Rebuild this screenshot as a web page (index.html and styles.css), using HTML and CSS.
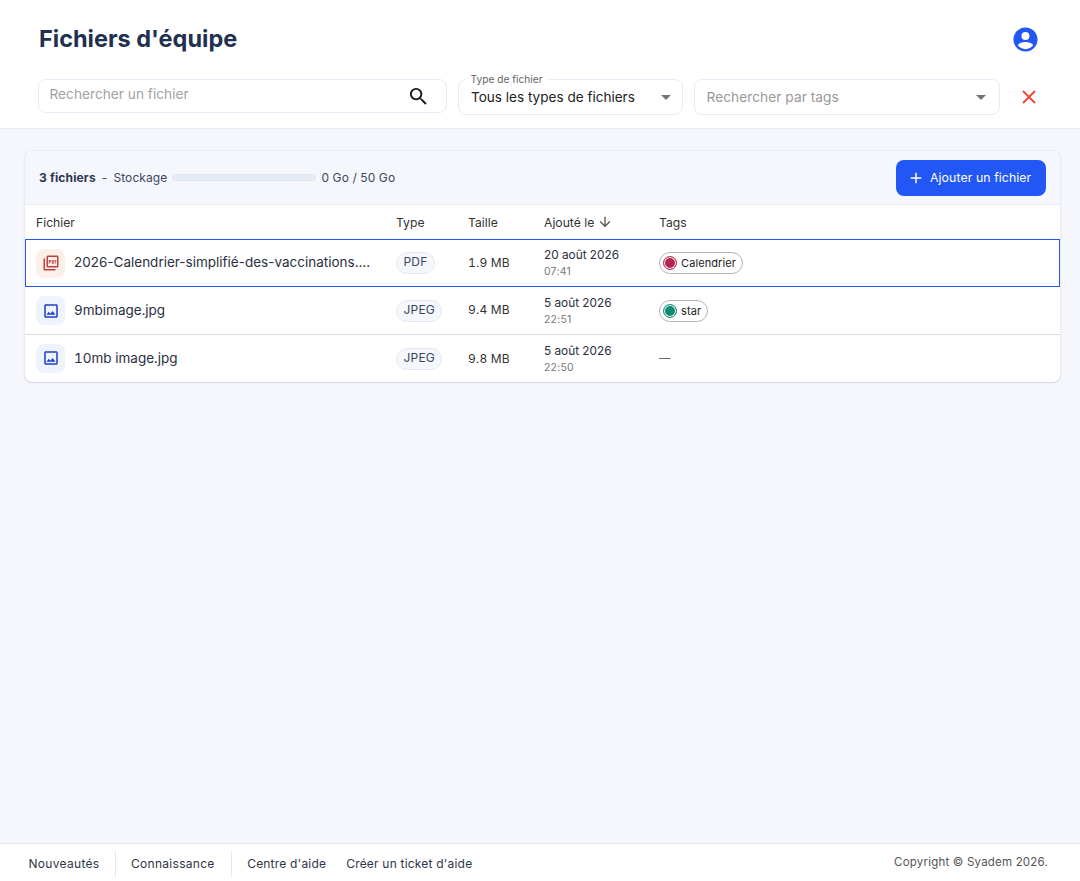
FILE: index.html
```html
<!DOCTYPE html>
<html lang="fr">
<head>
<meta charset="utf-8">
<title>Fichiers d'équipe</title>
<link rel="stylesheet" href="styles.css">
</head>
<body>
<div class="page">
  <header class="header">
    <div class="title-row">
      <h1 class="title">Fichiers d'équipe</h1>
      <svg class="avatar" viewBox="0 0 24 24" width="29" height="29"><path fill="#2357f5" d="M12 2C6.480 2 2 6.480 2 12s4.480 10 10 10 10-4.480 10-10S17.520 2 12 2zm0 3.800a3.300 3.300 0 1 1 0 6.600 3.300 3.300 0 0 1 0-6.600zM12 20c-2.600 0-4.900-1.200-6.400-3.200.6-1.700 4.300-2.700 6.400-2.700s5.800 1 6.400 2.700C16.900 18.800 14.600 20 12 20z"/></svg>
    </div>
    <div class="filters">
      <div class="field search">
        <span class="placeholder search-placeholder">Rechercher un fichier</span>
        <svg class="search-icon" viewBox="0 0 24 24" width="23" height="23"><path fill="#1a1a1a" d="M15.500 14h-.79l-.28-.27A6.470 6.470 0 0 0 16 9.500 6.500 6.500 0 1 0 9.500 16c1.610 0 3.090-.59 4.230-1.570l.27.28v.79l5 4.990L20.490 19l-4.990-5zm-6 0C7.010 14 5 11.990 5 9.500S7.010 5 9.500 5 14 7.010 14 9.500 11.990 14 9.500 14z"/></svg>
      </div>
      <div class="field select type-select">
        <span class="legend">Type de fichier</span>
        <span class="value">Tous les types de fichiers</span>
        <span class="caret"></span>
      </div>
      <div class="field select tag-select">
        <span class="placeholder tag-placeholder">Rechercher par tags</span>
        <span class="caret"></span>
      </div>
      <svg class="clear" viewBox="0 0 24 24" width="24" height="24"><path fill="none" stroke="#f44336" stroke-width="1.800" d="M6 6l12 12M18 6L6 18"/></svg>
    </div>
  </header>
  <main class="main">
    <section class="card">
      <div class="toolbar">
        <div class="summary">
          <strong class="count">3 fichiers</strong>
          <span class="sep">-</span>
          <span>Stockage</span>
          <span class="bar"></span>
          <span>0 Go / 50 Go</span>
        </div>
        <button class="add" type="button">
          <svg viewBox="0 0 24 24" width="18" height="18"><path fill="none" stroke="#fff" stroke-width="2" d="M12 5v14M5 12h14"/></svg>
          Ajouter un fichier
        </button>
      </div>
      <div class="row head">
        <div>Fichier</div>
        <div>Type</div>
        <div>Taille</div>
        <div class="sorted">Ajouté le
          <svg viewBox="0 0 24 24" width="16" height="16"><path fill="#555" d="M20 12l-1.410-1.410L13 16.170V4h-2v12.170l-5.580-5.590L4 12l8 8 8-8z"/></svg>
        </div>
        <div>Tags</div>
      </div>
      <div class="row item selected">
        <div class="file">
          <span class="file-icon pdf">
            <svg viewBox="0 0 24 24" width="18" height="18"><path fill="#c0403f" d="M20 2H8c-1.100 0-2 .9-2 2v12c0 1.100.9 2 2 2h12c1.100 0 2-.9 2-2V4c0-1.100-.9-2-2-2zm0 14H8V4h12v12zM4 6H2v14c0 1.100.9 2 2 2h14v-2H4V6zm12 6V9c0-.55-.45-1-1-1h-2v5h2c.55 0 1-.45 1-1zm-2-3h1v3h-1V9zm4 2h1v-1h-1V9h1V8h-2v5h1zm-8 0h1c.55 0 1-.45 1-1V9c0-.55-.45-1-1-1H9v5h1v-2zm0-2h1v1h-1V9z"/></svg>
          </span>
          <span class="name">2026-Calendrier-simplifié-des-vaccinations.…</span>
        </div>
        <div><span class="chip">PDF</span></div>
        <div class="size">1.9 MB</div>
        <div class="date"><span>20 août 2026</span><small>07:41</small></div>
        <div><span class="tag"><i class="dot red"></i>Calendrier</span></div>
      </div>
      <div class="row item">
        <div class="file">
          <span class="file-icon img">
            <svg viewBox="0 0 24 24" width="18" height="18"><path fill="#1f3fc4" d="M19 5v14H5V5h14m0-2H5c-1.100 0-2 .9-2 2v14c0 1.100.9 2 2 2h14c1.100 0 2-.9 2-2V5c0-1.100-.9-2-2-2zm-4.860 8.860l-3 3.870L9 13.140 6 17h12l-3.860-5.140z"/></svg>
          </span>
          <span class="name tabular">9mbimage.jpg</span>
        </div>
        <div><span class="chip">JPEG</span></div>
        <div class="size">9.4 MB</div>
        <div class="date"><span>5 août 2026</span><small>22:51</small></div>
        <div><span class="tag"><i class="dot green"></i>star</span></div>
      </div>
      <div class="row item last">
        <div class="file">
          <span class="file-icon img">
            <svg viewBox="0 0 24 24" width="18" height="18"><path fill="#1f3fc4" d="M19 5v14H5V5h14m0-2H5c-1.100 0-2 .9-2 2v14c0 1.100.9 2 2 2h14c1.100 0 2-.9 2-2V5c0-1.100-.9-2-2-2zm-4.860 8.860l-3 3.870L9 13.140 6 17h12l-3.860-5.140z"/></svg>
          </span>
          <span class="name tabular">10mb image.jpg</span>
        </div>
        <div><span class="chip">JPEG</span></div>
        <div class="size">9.8 MB</div>
        <div class="date"><span>5 août 2026</span><small>22:50</small></div>
        <div class="none">—</div>
      </div>
    </section>
  </main>
  <footer class="footer">
    <nav class="links">
      <a class="link divided">Nouveautés</a>
      <a class="link divided">Connaissance</a>
      <a class="link">Centre d'aide</a>
      <a class="link">Créer un ticket d'aide</a>
    </nav>
    <span class="copy">Copyright © Syadem 2026.</span>
  </footer>
</div>
</body>
</html>
```
FILE: styles.css
```css
* { box-sizing: border-box; }
html, body { margin: 0; padding: 0; }
body { font-family: Inter, "Liberation Sans", sans-serif; color: #1d2433; background: #f5f7fc; }
.page { display: flex; flex-direction: column; height: 881px; }

.header { background: #fff; border-bottom: 1px solid #e6ecf6; height: 129px; padding: 24px 28px 0 38px; }
.title-row { display: flex; justify-content: space-between; align-items: center; height: 30px; padding-left: 1px; margin-bottom: 25px; }
.title { margin: 0; font-size: 23.500px; line-height: 30px; font-weight: 700; color: #22304f; letter-spacing: 0; }
.avatar { display: block; margin-right: 12.500px; }

.filters { display: flex; align-items: flex-start; gap: 11px; }
.field { position: relative; display: flex; align-items: center; background: #fff; border: 1px solid #e6ecf6; border-radius: 8px; }
.search { width: 409px; height: 34px; padding: 0 16px 0 10.500px; justify-content: space-between; }
.placeholder { font-size: 13.700px; color: #a3a3a3; }
.search-placeholder { margin-top: -4px; }
.search-icon { display: block; }
.select { height: 36px; padding: 0 11px 0 12px; justify-content: space-between; }
.type-select { width: 225px; }
.tag-select { width: 306px; padding-left: 11.500px; padding-right: 13px; }
.legend { position: absolute; top: -8px; left: 6.500px; padding: 0 5px; background: #fff; font-size: 10.200px; line-height: 14px; color: #666; }
.value { font-size: 13.550px; color: #222; }
.tag-placeholder { color: #999; font-size: 13.700px; letter-spacing: .05px; }
.caret { width: 0; height: 0; border-left: 5px solid transparent; border-right: 5px solid transparent; border-top: 5px solid #757575; }
.clear { display: block; margin: 6px 0 0 6px; }

.main { flex: 1; padding: 21px 19px 0 24px; }
.card { background: #fff; border: 1px solid #e9edf6; border-bottom: 0; border-radius: 8px; box-shadow: 0 1px 1px rgba(30, 40, 70, .16); overflow: hidden; }
.toolbar { display: flex; justify-content: space-between; align-items: center; height: 54px; padding: 0 14px; background: #f5f7fc; border-bottom: 1px solid #e9edf6; }
.summary { display: flex; align-items: center; gap: 5px; font-size: 12px; letter-spacing: .1px; color: #3c4760; }
.count { font-weight: 700; color: #2c3650; letter-spacing: .15px; }
.sep { margin: 0 1px; }
.bar { width: 144px; height: 7px; border-radius: 4px; background: #e6ecf5; border: 1px solid #e0e6f1; }
.add { display: flex; align-items: center; gap: 5px; height: 36px; width: 150px; padding: 0 0 0 11px; background: #2357f5; color: #fff; border: 0; border-radius: 8px; font: 400 12.300px Inter, "Liberation Sans", sans-serif; letter-spacing: .08px; }

.row { display: grid; grid-template-columns: 360px 72px 76px 115px 1fr; padding-left: 11px; align-items: center; border-bottom: 1px solid #dcdde0; font-size: 12px; }
.head { height: 34px; border-bottom: 0; color: #333; font-size: 12.200px; }
.sorted { display: flex; align-items: center; gap: 3px; }
.item { height: 48px; padding-bottom: 2px; }
.selected { border: 1px solid #2357f5; padding-left: 10px; padding-bottom: 2px; }
.last { height: 47px; border-bottom: 0; padding-bottom: 1px; }
.file { display: flex; align-items: center; gap: 9px; }
.file-icon { display: flex; justify-content: center; align-items: center; width: 29px; height: 29px; margin-top: 2px; border-radius: 8px; }
.last .file-icon { margin-top: 0; }
.pdf { background: #fdf0e9; }
.img { background: #eff3fd; }
.name { font-size: 13.500px; color: #2a3040; white-space: nowrap; }
.tabular { font-variant-numeric: tabular-nums; }
.chip { display: inline-block; height: 22px; margin-top: 2px; padding: 0 6.500px; line-height: 18px; border: 1px solid #e6e9f3; border-radius: 11px; background: #f6f7fc; font-size: 12px; color: #3a4562; letter-spacing: .2px; }
.size { color: #333; letter-spacing: .2px; font-variant-numeric: tabular-nums; }
.date { display: flex; flex-direction: column; gap: 3px; padding-top: 2px; color: #2a2f3c; }
.date small { font-size: 10.500px; line-height: 12px; color: #777; letter-spacing: .2px; }
.date span { line-height: 15px; font-size: 11.800px; }
.tag { display: inline-flex; align-items: center; gap: 4px; height: 22px; margin-top: 2px; padding: 0 6px 0 3px; border: 1px solid #b5b5b5; border-radius: 11px; font-size: 11px; color: #222; letter-spacing: .1px; }
.dot { width: 14px; height: 14px; border-radius: 50%; border: 1px solid; box-shadow: inset 0 0 0 1px #fff; }
.red { background: #b5244f; border-color: #c4385f; }
.green { background: #0f8a70; border-color: #1c9a80; }
.none { color: #666; font-size: 11.500px; }

.footer { display: flex; justify-content: space-between; align-items: center; height: 38px; padding: 0 32px 0 13px; background: #fff; border-top: 1px solid #e2e6f0; }
.links { display: flex; align-items: stretch; height: 100%; padding: 7px 0 4px; }
.link { display: flex; align-items: center; padding: 0 16px 2px 15.500px; font-size: 12px; color: #2f3547; letter-spacing: .3px; }
.divided { border-right: 1px solid #e2e6f0; }
.link:nth-child(2) { padding-left: 14.500px; }
.link:nth-child(3) { padding-right: 20px; letter-spacing: .2px; }
.link:nth-child(4) { padding-left: 0; letter-spacing: .2px; }
.copy { font-size: 11.500px; color: #555; letter-spacing: .2px; margin-top: -1px; }
```
